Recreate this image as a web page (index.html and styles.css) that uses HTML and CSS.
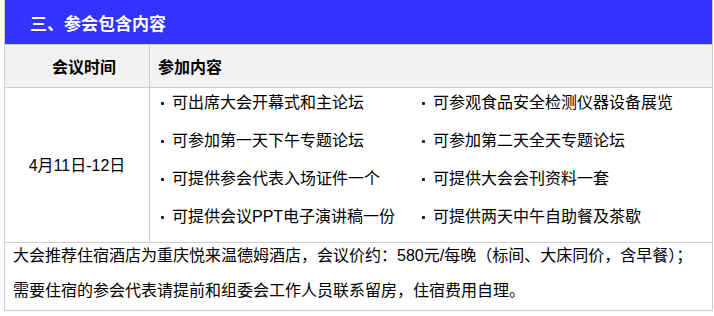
FILE: index.html
```html
<!DOCTYPE html>
<html lang="zh-CN">
<head>
<meta charset="utf-8">
<title>三、参会包含内容</title>
<link rel="stylesheet" href="styles.css">
</head>
<body>
<div class="sheet">
  <div class="title">三、参会包含内容</div>
  <div class="row head">
    <div class="cell c1">会议时间</div>
    <div class="cell c2">参加内容</div>
  </div>
  <div class="row body">
    <div class="cell c1 date">4月11日-12日</div>
    <ul class="cell c2 items">
      <li>可出席大会开幕式和主论坛</li>
      <li>可参观食品安全检测仪器设备展览</li>
      <li>可参加第一天下午专题论坛</li>
      <li>可参加第二天全天专题论坛</li>
      <li>可提供参会代表入场证件一个</li>
      <li>可提供大会会刊资料一套</li>
      <li>可提供会议PPT电子演讲稿一份</li>
      <li>可提供两天中午自助餐及茶歇</li>
    </ul>
  </div>
  <div class="note">
    <p>大会推荐住宿酒店为重庆悦来温德姆酒店，会议价约：580元/每晚（标间、大床同价，含早餐）；</p>
    <p>需要住宿的参会代表请提前和组委会工作人员联系留房，住宿费用自理。</p>
  </div>
</div>
</body>
</html>
```

FILE: styles.css
```css
* { box-sizing: border-box; }
html, body { margin: 0; padding: 0; background: #fff; }
body {
  font-family: "Liberation Sans", "Noto Sans CJK SC", sans-serif;
  font-size: 16px;
  color: #000;
}
.sheet {
  margin-left: 4px;
  width: 709px;
  border: 1px solid #ccc;
  border-top: none;
}
.title {
  height: 45px;
  background: #3333ff;
  color: #fff;
  font-weight: bold;
  font-size: 17px;
  padding-left: 25px;
  display: flex;
  align-items: center;
  border-bottom: 1px solid #ccc;
}
.row {
  display: grid;
  grid-template-columns: 145px 1fr;
  border-bottom: 1px solid #ccc;
}
.cell.c1 { border-right: 1px solid #ccc; }
.head {
  height: 43px;
  background: #f2f2f2;
  font-weight: bold;
}
.head .cell { display: flex; align-items: center; }
.head .c1 { justify-content: center; padding-left: 14px; }
.head .c2 { padding-left: 8px; }
.body { height: 155px; }
.date {
  display: flex;
  align-items: center;
  justify-content: center;
  padding-bottom: 2px;
}
.items {
  list-style: none;
  margin: 0;
  padding: 0 0 0 11px;
  display: grid;
  grid-template-columns: 261px 1fr;
  grid-auto-rows: 30px;
  row-gap: 8px;
  align-content: start;
}
.items li {
  display: flex;
  align-items: center;
  gap: 8px;
  line-height: 30px;
}
.items li::before {
  content: "";
  width: 3px;
  height: 3px;
  background: #111133;
  border-radius: 1px;
  flex: none;
}
.note {
  height: 67px;
  padding: 0 8px;
  display: flex;
  flex-direction: column;
  gap: 9px;
}
.note p {
  margin: 0;
  height: 26px;
  line-height: 26px;
  white-space: nowrap;
}
```
